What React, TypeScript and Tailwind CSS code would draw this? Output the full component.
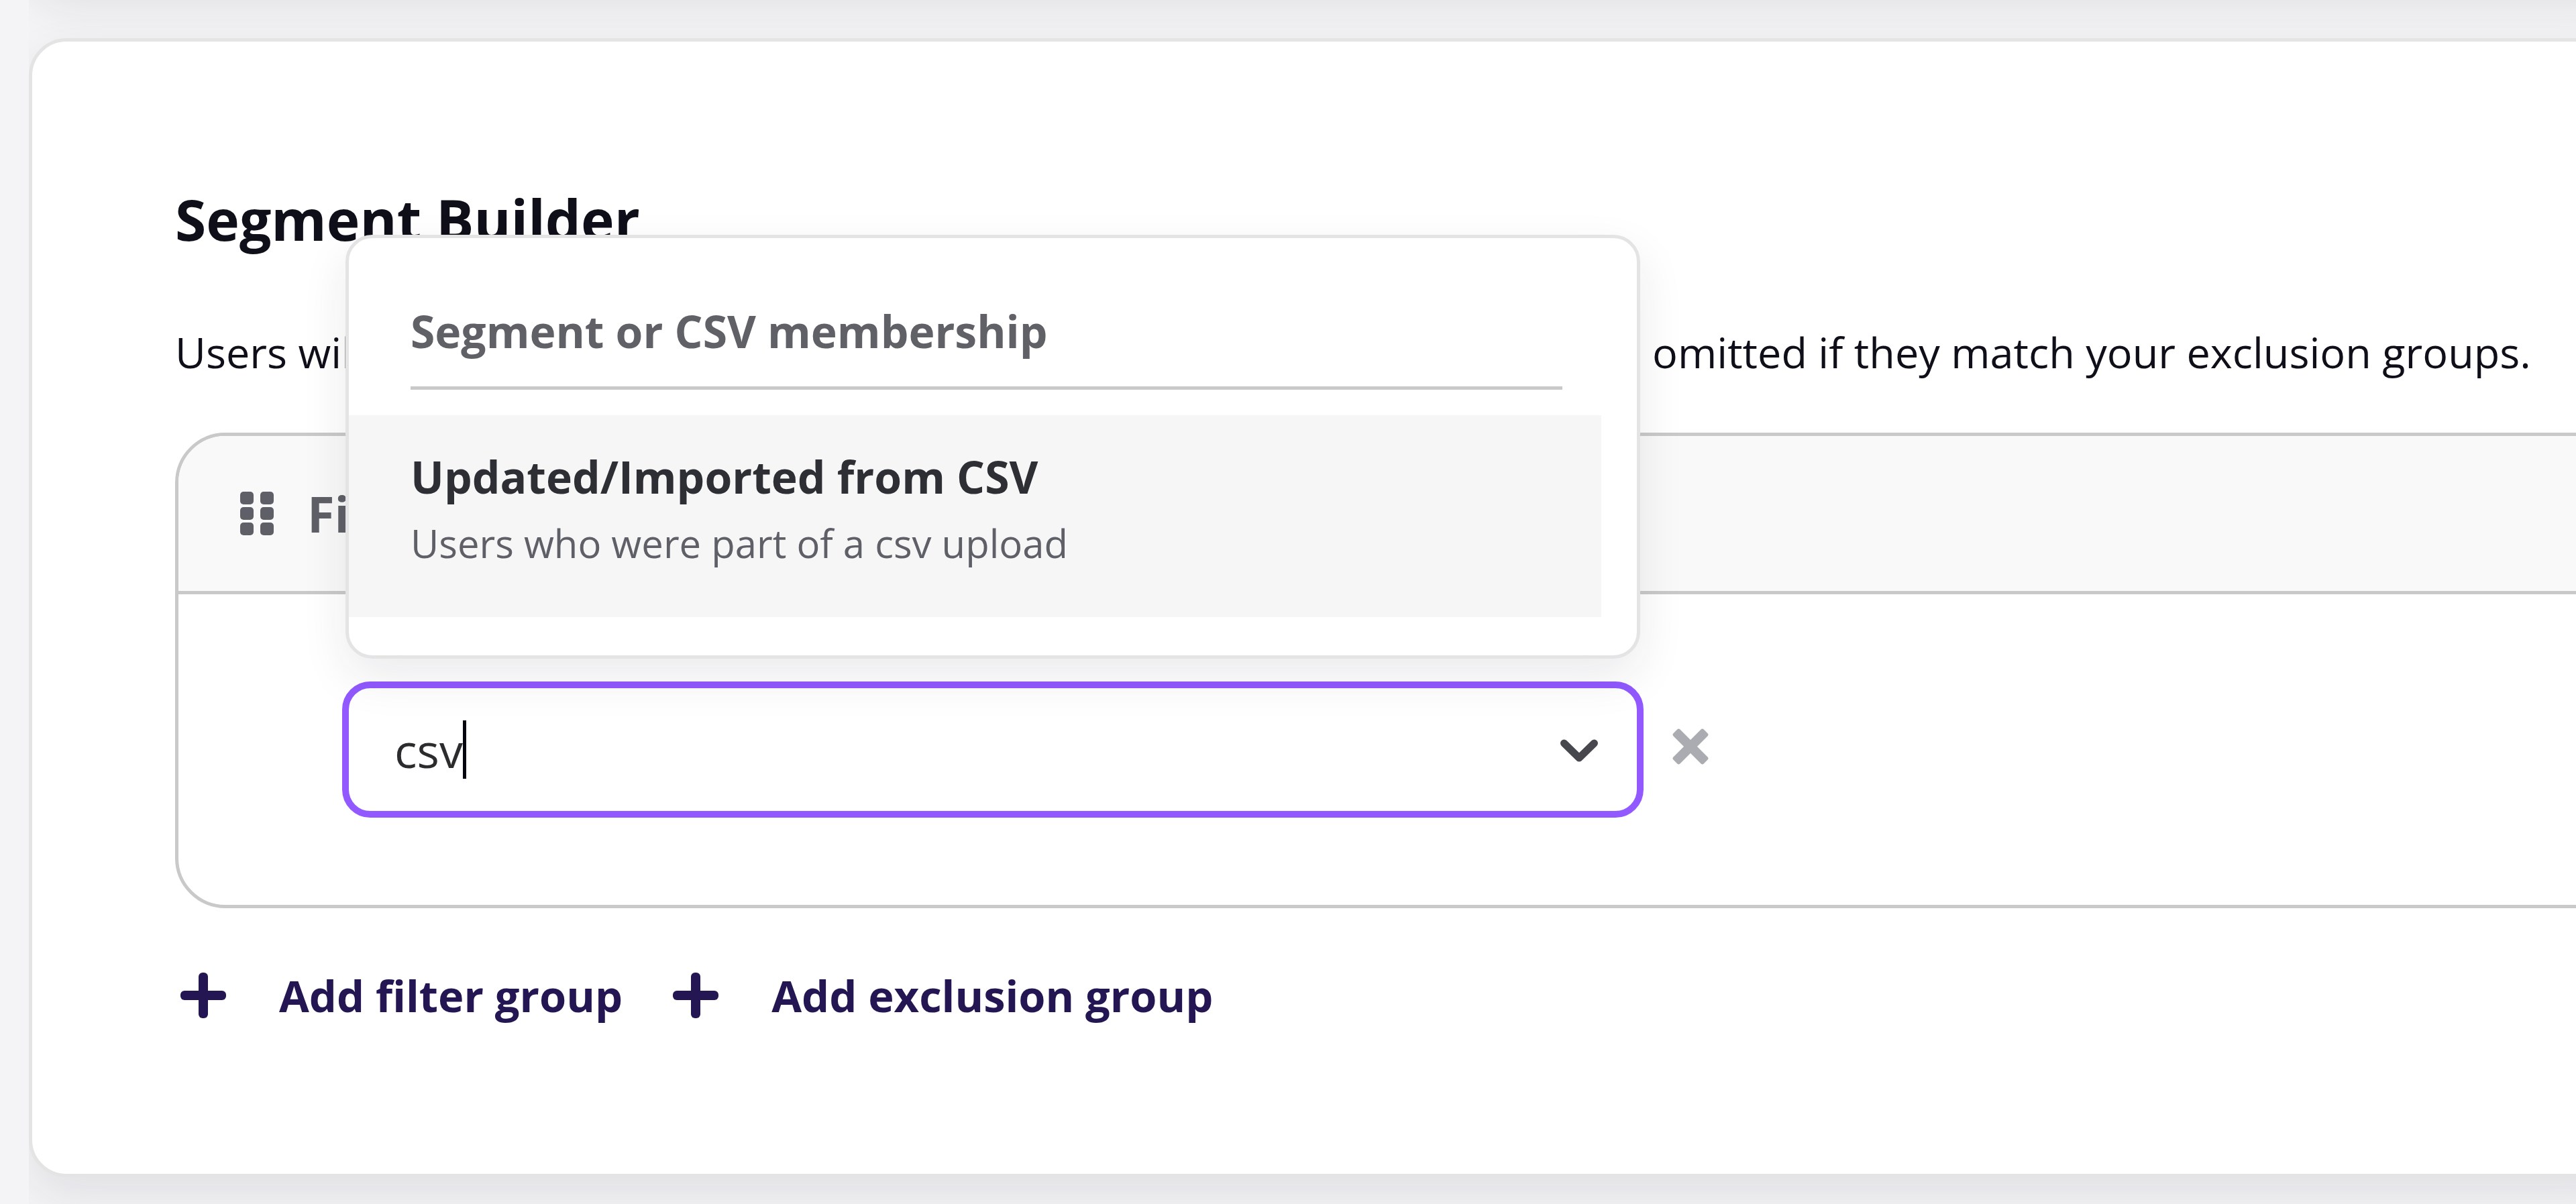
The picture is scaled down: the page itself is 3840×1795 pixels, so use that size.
import { useState } from "react"

const options = [
  { title: "Updated/Imported from CSV", description: "Users who were part of a csv upload" },
]

function GripIcon() {
  return (
    <svg width="50" height="66" viewBox="0 0 50 66" fill="currentColor" aria-hidden="true">
      {[0, 23, 46].map((y) => (
        <g key={y}>
          <rect x="0" y={y} width="20" height="19" rx="5" />
          <rect x="30" y={y} width="20" height="19" rx="5" />
        </g>
      ))}
    </svg>
  )
}

function PlusIcon() {
  return (
    <svg width="68" height="68" viewBox="0 0 68 68" fill="currentColor" aria-hidden="true">
      <rect x="27" y="0" width="14" height="68" rx="6" />
      <rect x="0" y="27" width="68" height="14" rx="6" />
    </svg>
  )
}

function ChevronIcon() {
  return (
    <svg width="58" height="36" viewBox="0 0 58 36" fill="none" stroke="currentColor" strokeWidth="11" strokeLinecap="round" strokeLinejoin="round" aria-hidden="true">
      <path d="M6.500 8L29 30L51.500 8" />
    </svg>
  )
}

function CloseIcon() {
  return (
    <svg width="54" height="54" viewBox="0 0 54 54" fill="currentColor" aria-hidden="true">
      <rect x="-5" y="20" width="64" height="14" rx="3" transform="rotate(45 27 27)" />
      <rect x="-5" y="20" width="64" height="14" rx="3" transform="rotate(-45 27 27)" />
    </svg>
  )
}

function FilterSelect() {
  const [query, setQuery] = useState("csv")

  return (
    <div className="relative w-[1940px] max-w-full">
      <div className="flex h-[203px] items-center rounded-[42px] border-[10px] border-[#9159ff] bg-white pl-[68px] pr-[57px]">
        <input
          type="text"
          aria-label="Filter"
          value={query}
          onChange={(e) => setQuery(e.target.value)}
          className="min-w-0 bg-transparent text-[70px] leading-[94px] text-[#2c2c2e] caret-transparent outline-none [field-sizing:content]"
        />
        {/* Text cursor */}
        <span className="h-[87px] w-[5px] bg-[#05050f]" />
        <button type="button" aria-label="Toggle options" className="ml-auto text-[#47484e]">
          <ChevronIcon />
        </button>
      </div>

      {/* Options menu, opens upwards */}
      <div className="absolute inset-x-[5px] bottom-full mb-[34px] rounded-[40px] border-[5px] border-[#e4e4e4] bg-white pb-[57px] pt-[91px] shadow-[0_28px_70px_rgba(30,35,60,0.09)]">
        <div className="ml-[92px] mr-[111px] mb-[38px] border-b-[5px] border-[#c9c9ca] pb-[36px] text-[66px] font-bold leading-[94px] text-[#606167]">
          Segment or CSV membership
        </div>
        <ul role="listbox" aria-label="Segment or CSV membership" className="mr-[53px]">
          {options.map((option) => (
            <li key={option.title} role="option" aria-selected="true" className="bg-[#f6f6f6] pb-[69px] pl-[92px] pt-[44px]">
              <div className="text-[66px] font-bold leading-[94px] text-[#2e2f35]">{option.title}</div>
              <div className="mt-3 text-[58px] leading-[82px] text-[#5f6067]">{option.description}</div>
            </li>
          ))}
        </ul>
      </div>
    </div>
  )
}

function AddButton({ label }: { label: string }) {
  return (
    <button type="button" className="flex items-center gap-[79px] text-[65px] font-bold leading-[94px] text-[#231653]">
      <PlusIcon />
      {label}
    </button>
  )
}

export default function App() {
  return (
    <div className="min-h-screen overflow-hidden bg-[#f4f4f6] pl-[43px] font-['Open_Sans',sans-serif] text-[#0f0f19]">
      <main className="flex min-h-screen flex-col overflow-hidden pb-[41px]">
        {/* Bottom of the card above */}
        <div className="-mr-20 -mt-[400px] mb-[77px] h-[380px] shrink-0 rounded-[56px] border-[5px] border-[#e4e4e4] bg-white shadow-[0_28px_70px_rgba(30,35,60,0.09)]" />

        <section className="-mr-20 rounded-[56px] border-[5px] border-[#e4e4e4] bg-white pb-[219px] pl-[213px] pt-[210px] shadow-[0_28px_70px_rgba(30,35,60,0.09)]">
          <h2 className="text-[84px] font-bold leading-[110px]">Segment Builder</h2>
          <p className="mt-24 whitespace-nowrap text-[63px] leading-[94px]">
            Users will be included when they match your filter groups, and will then be omitted if they match your exclusion groups.
          </p>

          <div className="-mr-20 mt-[73px] rounded-[75px] border-[5px] border-[#c9c9ca]">
            <div className="flex h-[236px] items-center gap-[50px] rounded-t-[70px] border-b-[5px] border-[#c9c9ca] bg-[#f9f9f9] pl-[92px] text-[#5f6067]">
              <GripIcon />
              <h3 className="text-[74px] font-bold leading-[94px]">Filter Group 1</h3>
            </div>
            <div className="flex items-center gap-[43px] py-[130px] pl-[244px]">
              <FilterSelect />
              <button type="button" aria-label="Remove filter" className="pb-[10px] text-[#abacb1]">
                <CloseIcon />
              </button>
            </div>
          </div>

          <div className="ml-2 mt-[83px] flex gap-[75px]">
            <AddButton label="Add filter group" />
            <AddButton label="Add exclusion group" />
          </div>
        </section>
      </main>
    </div>
  )
}
